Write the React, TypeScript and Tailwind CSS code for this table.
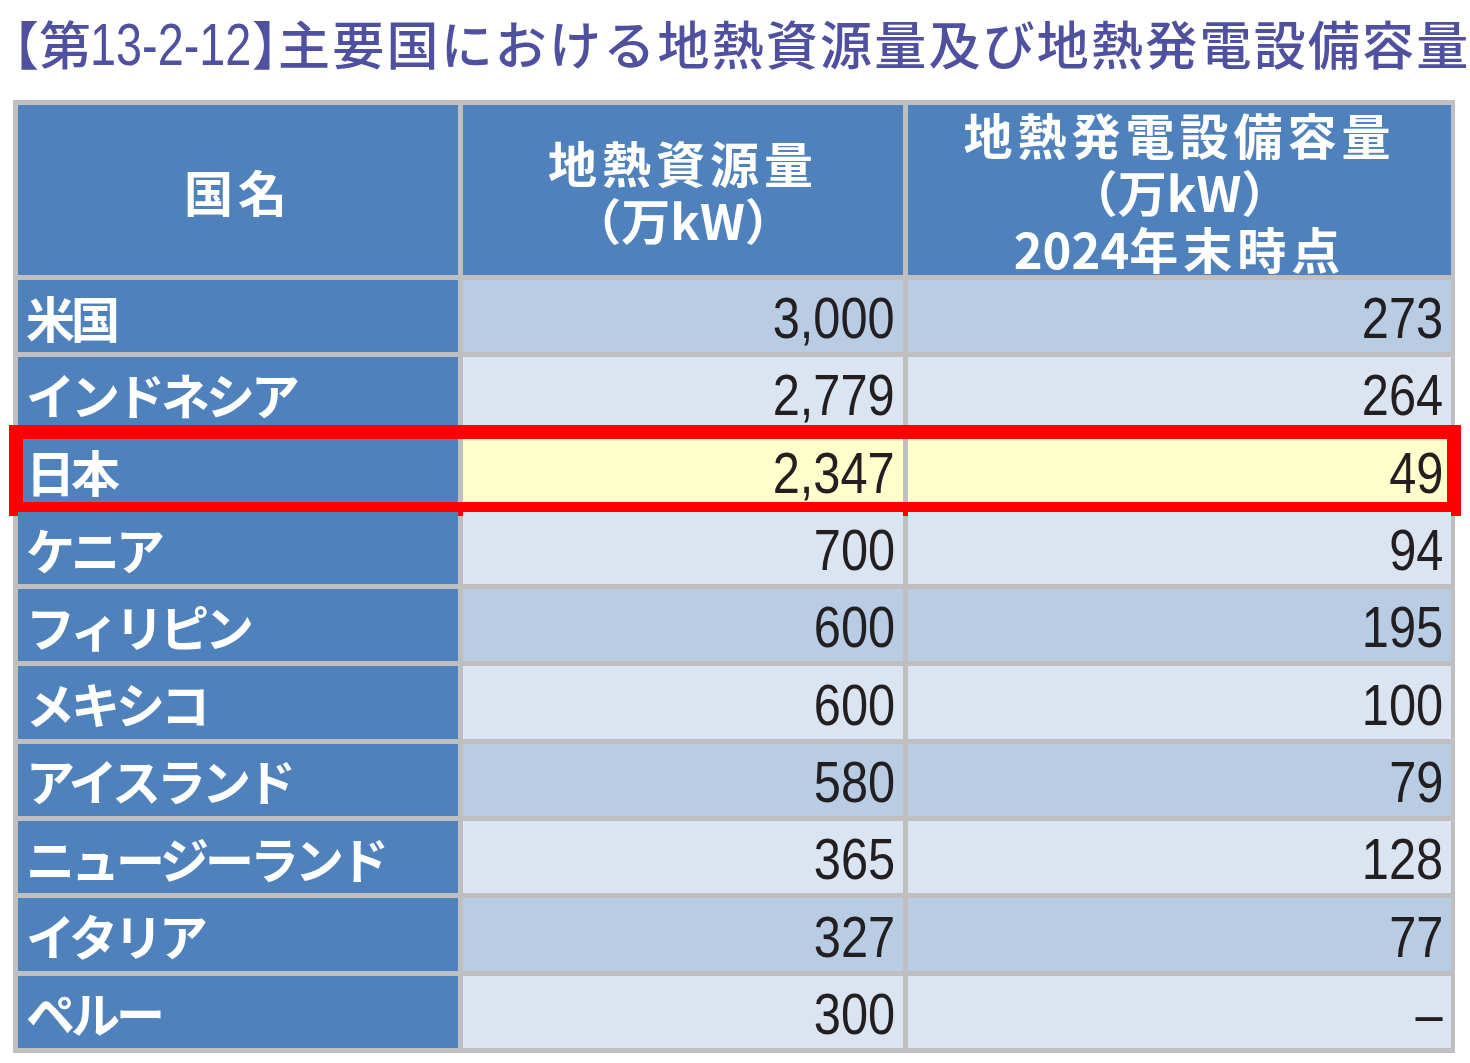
type Row = { name: string; res: string; cap: string };

const rows: Row[] = [
  { name: "米国", res: "3,000", cap: "273" },
  { name: "インドネシア", res: "2,779", cap: "264" },
  { name: "日本", res: "2,347", cap: "49" },
  { name: "ケニア", res: "700", cap: "94" },
  { name: "フィリピン", res: "600", cap: "195" },
  { name: "メキシコ", res: "600", cap: "100" },
  { name: "アイスランド", res: "580", cap: "79" },
  { name: "ニュージーランド", res: "365", cap: "128" },
  { name: "イタリア", res: "327", cap: "77" },
  { name: "ペルー", res: "300", cap: "–" },
];

const NumCell = ({ value, bg }: { value: string; bg: string }) => (
  <div className={`${bg} flex items-center justify-end pr-[8px] pt-[5px] overflow-hidden`}>
    <span className="inline-block origin-right scale-x-[0.855] font-['Liberation_Sans',Arial,sans-serif] text-[57px] leading-none text-[#231f20]">
      {value}
    </span>
  </div>
);

const DataRow = ({ row, i }: { row: Row; i: number }) => {
  const japan = row.name === "日本";
  const bg = japan ? "bg-[#ffffcc]" : i % 2 === 0 ? "bg-[#b8cce4]" : "bg-[#dbe5f1]";
  return (
    <div className="relative grid grid-cols-[440px_440px_543px] grid-rows-1 gap-[5px] h-[72.3px]">
      <div className="bg-[#4f81bd] flex items-center pl-[8px] text-white text-[49px] leading-none font-bold tracking-[-4px] whitespace-nowrap">
        {row.name}
      </div>
      <NumCell value={row.res} bg={bg} />
      <NumCell value={row.cap} bg={bg} />
      {japan && (
        <div className="absolute -left-[9px] -right-[10px] -top-[10px] -bottom-[9px] border-[14px] border-[#ff0000]" />
      )}
    </div>
  );
};

export default function App() {
  return (
    <div className="w-[1470px] h-[1063px] bg-white overflow-hidden font-['Noto_Sans_CJK_JP','Noto_Sans',sans-serif]">
      <h1 className="h-[100px] pt-[8px] pl-[13px] text-[#5050a0] text-[52px] font-medium tracking-[2.2px] leading-[70px] whitespace-nowrap">
        <span className="tracking-normal [font-feature-settings:'halt']">【</span>
        第
        <span className="inline-block -ml-[3px] mr-[-45px] origin-left scale-x-[0.78] tracking-normal font-['Liberation_Sans',Arial,sans-serif] text-[60px] font-normal">
          13-2-12
        </span>
        <span className="tracking-normal [font-feature-settings:'halt']">】</span>
        主要国における地熱資源量及び地熱発電設備容量
      </h1>

      <div className="ml-[13px] w-[1442px] bg-[#bfbfbf] pt-[5px] pl-[5px] pr-[4px] pb-[5px] flex flex-col gap-[5px]">
        <div className="grid grid-cols-[440px_440px_543px] grid-rows-1 gap-[5px] h-[170px] text-white font-bold text-[49px] leading-[57px] tracking-[5px] text-center">
          <div className="bg-[#4f81bd] flex items-center justify-center">国名</div>
          <div className="bg-[#4f81bd] flex flex-col items-center justify-center">
            <span>地熱資源量</span>
            <span className="tracking-[0px]">（万kW）</span>
          </div>
          <div className="bg-[#4f81bd] flex flex-col items-center justify-center">
            <span>地熱発電設備容量</span>
            <span className="tracking-[0px]">（万kW）</span>
            <span>
              <span className="tracking-[0px]">2024</span>年末時点
            </span>
          </div>
        </div>
        {rows.map((r, i) => (
          <DataRow key={r.name} row={r} i={i} />
        ))}
      </div>
    </div>
  );
}
